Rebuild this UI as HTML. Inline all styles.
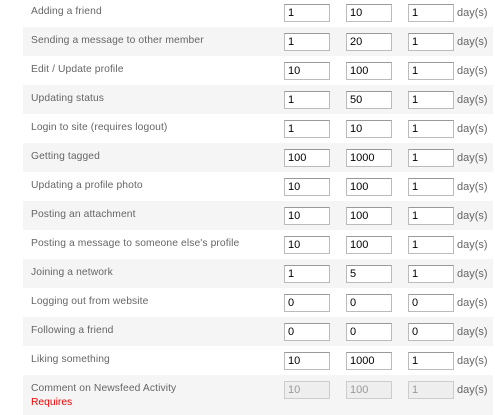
<!DOCTYPE html>
<html><head><style>
body{margin:0;width:495px;height:400px;overflow:hidden;background:#fff;font-family:"Liberation Sans",sans-serif;font-size:11.5px;color:#666}
.r{position:absolute;left:23px;width:470px;height:29px}
.r.a{background:#f5f5f5}
.l{position:absolute;left:8px;top:8px;white-space:nowrap;font-size:10.3px;letter-spacing:0.1px}
.i{position:absolute;top:6px;border:1px solid #bbb;border-top-color:#999;background:#fff;color:#000;font-size:11px;line-height:16px;padding-left:3px;box-sizing:border-box;width:46px;height:18px}
.d .i{background:#eee;color:#999;border-color:#ccc}
.d1{left:261px}.d2{left:323px}.d3{left:385px}
.u{position:absolute;left:434px;top:9px;font-size:11px}
.req{position:absolute;left:8px;top:22px;color:#e00;font-size:10.3px}
</style></head><body>
<div class="r" style="top:-2px"><span class="l">Adding a friend</span><span class="i d1">1</span><span class="i d2">10</span><span class="i d3">1</span><span class="u">day(s)</span></div>
<div class="r a" style="top:27px"><span class="l">Sending a message to other member</span><span class="i d1">1</span><span class="i d2">20</span><span class="i d3">1</span><span class="u">day(s)</span></div>
<div class="r" style="top:56px"><span class="l">Edit / Update profile</span><span class="i d1">10</span><span class="i d2">100</span><span class="i d3">1</span><span class="u">day(s)</span></div>
<div class="r a" style="top:85px"><span class="l">Updating status</span><span class="i d1">1</span><span class="i d2">50</span><span class="i d3">1</span><span class="u">day(s)</span></div>
<div class="r" style="top:114px"><span class="l">Login to site (requires logout)</span><span class="i d1">1</span><span class="i d2">10</span><span class="i d3">1</span><span class="u">day(s)</span></div>
<div class="r a" style="top:143px"><span class="l">Getting tagged</span><span class="i d1">100</span><span class="i d2">1000</span><span class="i d3">1</span><span class="u">day(s)</span></div>
<div class="r" style="top:172px"><span class="l">Updating a profile photo</span><span class="i d1">10</span><span class="i d2">100</span><span class="i d3">1</span><span class="u">day(s)</span></div>
<div class="r a" style="top:201px"><span class="l">Posting an attachment</span><span class="i d1">10</span><span class="i d2">100</span><span class="i d3">1</span><span class="u">day(s)</span></div>
<div class="r" style="top:230px"><span class="l">Posting a message to someone else's profile</span><span class="i d1">10</span><span class="i d2">100</span><span class="i d3">1</span><span class="u">day(s)</span></div>
<div class="r a" style="top:259px"><span class="l">Joining a network</span><span class="i d1">1</span><span class="i d2">5</span><span class="i d3">1</span><span class="u">day(s)</span></div>
<div class="r" style="top:288px"><span class="l">Logging out from website</span><span class="i d1">0</span><span class="i d2">0</span><span class="i d3">0</span><span class="u">day(s)</span></div>
<div class="r a" style="top:317px"><span class="l">Following a friend</span><span class="i d1">0</span><span class="i d2">0</span><span class="i d3">0</span><span class="u">day(s)</span></div>
<div class="r" style="top:346px"><span class="l">Liking something</span><span class="i d1">10</span><span class="i d2">1000</span><span class="i d3">1</span><span class="u">day(s)</span></div>
<div class="r a d" style="top:375px;height:40px"><span class="l">Comment on Newsfeed Activity</span><span class="req">Requires</span><span class="i d1">10</span><span class="i d2">100</span><span class="i d3">1</span><span class="u">day(s)</span></div>
</body></html>
